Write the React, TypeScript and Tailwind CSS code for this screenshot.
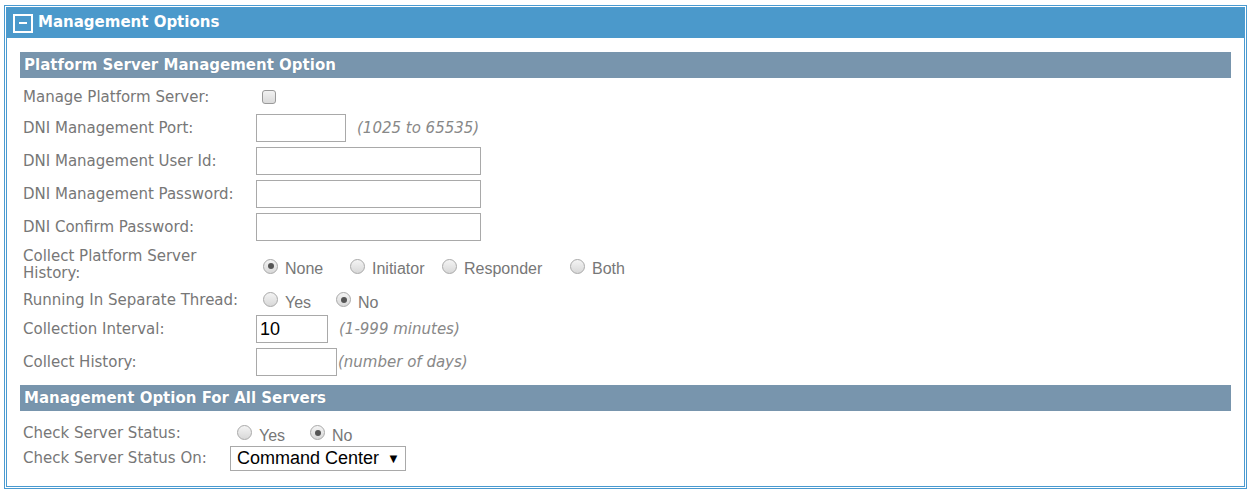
import React from 'react';

const labelFont = { fontFamily: '"DejaVu Sans", Verdana, sans-serif' };
const arialFont = { fontFamily: '"Liberation Sans", Arial, sans-serif' };

function Radio({ checked = false }: { checked?: boolean }) {
  return (
    <span className="relative inline-flex h-[15px] w-[15px] shrink-0 items-center justify-center rounded-full border border-[#a9a9a9] bg-gradient-to-b from-[#f4f4f4] to-[#d8d8d8] -mt-[3px]">
      {checked && <span className="h-[6px] w-[6px] rounded-full bg-[#555]" />}
    </span>
  );
}

function RadioOption({
  label,
  checked,
  width,
}: {
  label: string;
  checked?: boolean;
  width: string;
}) {
  return (
    <div className={`flex items-center gap-[7px] ${width}`}>
      <Radio checked={checked} />
      <span className="text-[16px] leading-none text-[#777] mt-[3px]" style={arialFont}>
        {label}
      </span>
    </div>
  );
}

function SectionBar({ title }: { title: string }) {
  return (
    <div className="flex h-[26px] items-center bg-[#7895ad] pl-[4px]">
      <span
        className="text-[15px] font-bold text-white"
        style={{ ...labelFont, textShadow: '0 0 1px #5d7890' }}
      >
        {title}
      </span>
    </div>
  );
}

function Row({
  label,
  labelWidth = 'w-[236px]',
  className = '',
  children,
}: {
  label: React.ReactNode;
  labelWidth?: string;
  className?: string;
  children?: React.ReactNode;
}) {
  return (
    <div className={`flex items-center ${className}`}>
      <div className={`${labelWidth} shrink-0 pl-[3px] text-[15px] leading-[17px] text-[#777]`} style={labelFont}>
        {label}
      </div>
      {children}
    </div>
  );
}

function TextBox({ width, value }: { width: string; value?: string }) {
  return (
    <div
      className={`${width} flex h-[28px] items-center border border-[#a9a9a9] bg-white pl-[3px] text-[18px] text-black`}
      style={arialFont}
    >
      {value}
    </div>
  );
}

function Hint({ children, className = '' }: { children: React.ReactNode; className?: string }) {
  return (
    <span className={`text-[15px] italic text-[#888] ${className}`} style={labelFont}>
      {children}
    </span>
  );
}

export default function App() {
  return (
    <div className="bg-white pl-[4px] pt-[5px]">
      <div className="h-[484px] w-[1243px] border border-[#4a9ad0] bg-white p-px">
        <div className="h-full border border-[#4a9ad0]">
          <div className="flex h-[30px] items-center gap-[5px] bg-[#4b99cb] pl-[6px]">
            <div className="flex h-[19px] w-[20px] items-center justify-center border-2 border-white">
              <div className="h-[2px] w-[8px] bg-white" />
            </div>
            <span className="-mt-[1px] text-[15px] font-bold text-white" style={labelFont}>
              Management Options
            </span>
          </div>

          <div className="pl-[13px] pr-[13px] pt-[14px]">
            <SectionBar title="Platform Server Management Option" />

            <Row label="Manage Platform Server:" className="mt-[6px] h-[26px]">
              <span className="ml-[6px] h-[14px] w-[14px] rounded-[3px] border border-[#9a9a9a] bg-gradient-to-b from-[#f2f2f2] to-[#dadada]" />
            </Row>

            <Row label="DNI Management Port:" className="mt-[4px]">
              <TextBox width="w-[90px]" />
              <Hint className="ml-[11px]">(1025 to 65535)</Hint>
            </Row>

            <Row label="DNI Management User Id:" className="mt-[5px]">
              <TextBox width="w-[225px]" />
            </Row>

            <Row label="DNI Management Password:" className="mt-[5px]">
              <TextBox width="w-[225px]" />
            </Row>

            <Row label="DNI Confirm Password:" className="mt-[5px]">
              <TextBox width="w-[225px]" />
            </Row>

            <Row
              label={
                <>
                  Collect Platform Server
                  <br />
                  History:
                </>
              }
              className="mt-[7px] h-[34px]"
            >
              <div className="ml-[7px] mt-[5px] flex items-center">
                <RadioOption label="None" checked width="w-[87px]" />
                <RadioOption label="Initiator" width="w-[92px]" />
                <RadioOption label="Responder" width="w-[128px]" />
                <RadioOption label="Both" width="w-[60px]" />
              </div>
            </Row>

            <Row label="Running In Separate Thread:" className="mt-[5px] h-[26px]">
              <div className="ml-[7px] mt-[2px] flex items-center">
                <RadioOption label="Yes" width="w-[73px]" />
                <RadioOption label="No" checked width="w-[50px]" />
              </div>
            </Row>

            <Row label="Collection Interval:" className="mt-[2px]">
              <TextBox width="w-[72px]" value="10" />
              <Hint className="ml-[11px]">(1-999 minutes)</Hint>
            </Row>

            <Row label="Collect History:" className="mt-[5px]">
              <TextBox width="w-[81px]" />
              <Hint className="ml-[1px]">(number of days)</Hint>
            </Row>

            <div className="mt-[9px]">
              <SectionBar title="Management Option For All Servers" />
            </div>

            <Row label="Check Server Status:" labelWidth="w-[210px]" className="mt-[10px] h-[24px]">
              <div className="ml-[7px] mt-[2px] flex items-center">
                <RadioOption label="Yes" width="w-[73px]" />
                <RadioOption label="No" checked width="w-[50px]" />
              </div>
            </Row>

            <Row label="Check Server Status On:" labelWidth="w-[210px]" className="mt-[1px]">
              <div
                className="flex h-[25px] w-[176px] items-center border border-[#a9a9a9] bg-white pl-[6px] text-[18px] text-black"
                style={arialFont}
              >
                <span>Command Center</span>
                <span className="ml-[8px] text-[13px]">▼</span>
              </div>
            </Row>
          </div>
        </div>
      </div>
    </div>
  );
}
